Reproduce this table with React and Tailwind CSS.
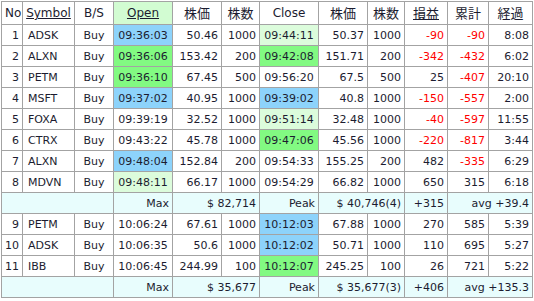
import React from 'react';

const BLUE = 'bg-[#8dd3fb]';
const GREEN = 'bg-[#82fa82]';
const LIGHT = 'bg-[#dcfcdc]';

const rows = [
  [1, 'ADSK', '09:36:03', BLUE, '50.46', '1000', '09:44:11', LIGHT, '50.37', '1000', '-90', '-90', '8:08'],
  [2, 'ALXN', '09:36:06', GREEN, '153.42', '200', '09:42:08', GREEN, '151.71', '200', '-342', '-432', '6:02'],
  [3, 'PETM', '09:36:10', GREEN, '67.45', '500', '09:56:20', '', '67.5', '500', '25', '-407', '20:10'],
  [4, 'MSFT', '09:37:02', BLUE, '40.95', '1000', '09:39:02', BLUE, '40.8', '1000', '-150', '-557', '2:00'],
  [5, 'FOXA', '09:39:19', '', '32.52', '1000', '09:51:14', LIGHT, '32.48', '1000', '-40', '-597', '11:55'],
  [6, 'CTRX', '09:43:22', '', '45.78', '1000', '09:47:06', GREEN, '45.56', '1000', '-220', '-817', '3:44'],
  [7, 'ALXN', '09:48:04', BLUE, '152.84', '200', '09:54:33', '', '155.25', '200', '482', '-335', '6:29'],
  [8, 'MDVN', '09:48:11', LIGHT, '66.17', '1000', '09:54:29', '', '66.82', '1000', '650', '315', '6:18'],
];

const rows2 = [
  [9, 'PETM', '10:06:24', '', '67.61', '1000', '10:12:03', BLUE, '67.88', '1000', '270', '585', '5:39'],
  [10, 'ADSK', '10:06:35', '', '50.6', '1000', '10:12:02', BLUE, '50.71', '1000', '110', '695', '5:27'],
  [11, 'IBB', '10:06:45', '', '244.99', '100', '10:12:07', GREEN, '245.25', '100', '26', '721', '5:22'],
];

const td = 'border border-[#a3a3a3] px-[3px] py-0 whitespace-nowrap';
const jp = 'text-[13px] font-["Noto_Sans_CJK_JP",sans-serif]';

function red(v) {
  return v.startsWith('-') ? 'text-[#ff0000]' : '';
}

function Row({ r }) {
  const [no, sym, open, ob, p1, q1, close, cb, p2, q2, pl, cum, el] = r;
  return (
    <tr className="h-[21px]">
      <td className={`${td} text-right`}>{no}</td>
      <td className={`${td} pl-[5px]`}>{sym}</td>
      <td className={`${td} text-center`}>Buy</td>
      <td className={`${td} text-center ${ob}`}>{open}</td>
      <td className={`${td} text-right`}>{p1}</td>
      <td className={`${td} text-right`}>{q1}</td>
      <td className={`${td} text-center ${cb}`}>{close}</td>
      <td className={`${td} text-right`}>{p2}</td>
      <td className={`${td} text-right`}>{q2}</td>
      <td className={`${td} text-right ${red(pl)}`}>{pl}</td>
      <td className={`${td} text-right ${red(cum)}`}>{cum}</td>
      <td className={`${td} text-right`}>{el}</td>
    </tr>
  );
}

function Summary({ max, peak, pl, avg }) {
  const s = `${td} bg-[#e8fdfd] text-right`;
  return (
    <tr className="h-[21px]">
      <td className={s} colSpan={3}></td>
      <td className={s}>Max</td>
      <td className={s} colSpan={2}>{max}</td>
      <td className={s}>Peak</td>
      <td className={s} colSpan={2}>{peak}</td>
      <td className={s}>{pl}</td>
      <td className={s} colSpan={2}>{avg}</td>
    </tr>
  );
}

export default function App() {
  const widths = [21, 52, 39, 59, 49, 38, 59, 49, 37, 43, 41, 44];
  return (
    <div className="w-[534px] h-[301px] bg-white pl-px pt-px">
      <table className='table-fixed border-collapse w-[531px] text-[11px] leading-none text-[#1c1c30] font-["DejaVu_Sans",sans-serif]'>
        <colgroup>
          <col className="w-[21px]" />
          <col className="w-[52px]" />
          <col className="w-[39px]" />
          <col className="w-[59px]" />
          <col className="w-[49px]" />
          <col className="w-[38px]" />
          <col className="w-[59px]" />
          <col className="w-[49px]" />
          <col className="w-[37px]" />
          <col className="w-[43px]" />
          <col className="w-[41px]" />
          <col className="w-[44px]" />
        </colgroup>
        <thead>
          <tr className="h-[23px] font-normal">
            <th className={`${td} font-normal text-[12px] px-0`}>No</th>
            <th className={`${td} font-normal text-[12px] underline`}>Symbol</th>
            <th className={`${td} font-normal text-[12px]`}>B/S</th>
            <th className={`${td} font-normal text-[12px] underline bg-[#d2fcd2]`}>Open</th>
            <th className={`${td} font-normal`}><span className={jp}>株価</span></th>
            <th className={`${td} font-normal`}><span className={jp}>株数</span></th>
            <th className={`${td} font-normal text-[12px]`}>Close</th>
            <th className={`${td} font-normal`}><span className={jp}>株価</span></th>
            <th className={`${td} font-normal`}><span className={jp}>株数</span></th>
            <th className={`${td} font-normal`}><span className={`${jp} underline`}>損益</span></th>
            <th className={`${td} font-normal`}><span className={jp}>累計</span></th>
            <th className={`${td} font-normal`}><span className={jp}>経過</span></th>
          </tr>
        </thead>
        <tbody>
          {rows.map((r) => <Row key={r[0]} r={r} />)}
          <Summary max="$ 82,714" peak="$ 40,746(4)" pl="+315" avg="avg +39.4" />
          {rows2.map((r) => <Row key={r[0]} r={r} />)}
          <Summary max="$ 35,677" peak="$ 35,677(3)" pl="+406" avg="avg +135.3" />
        </tbody>
      </table>
    </div>
  );
}
